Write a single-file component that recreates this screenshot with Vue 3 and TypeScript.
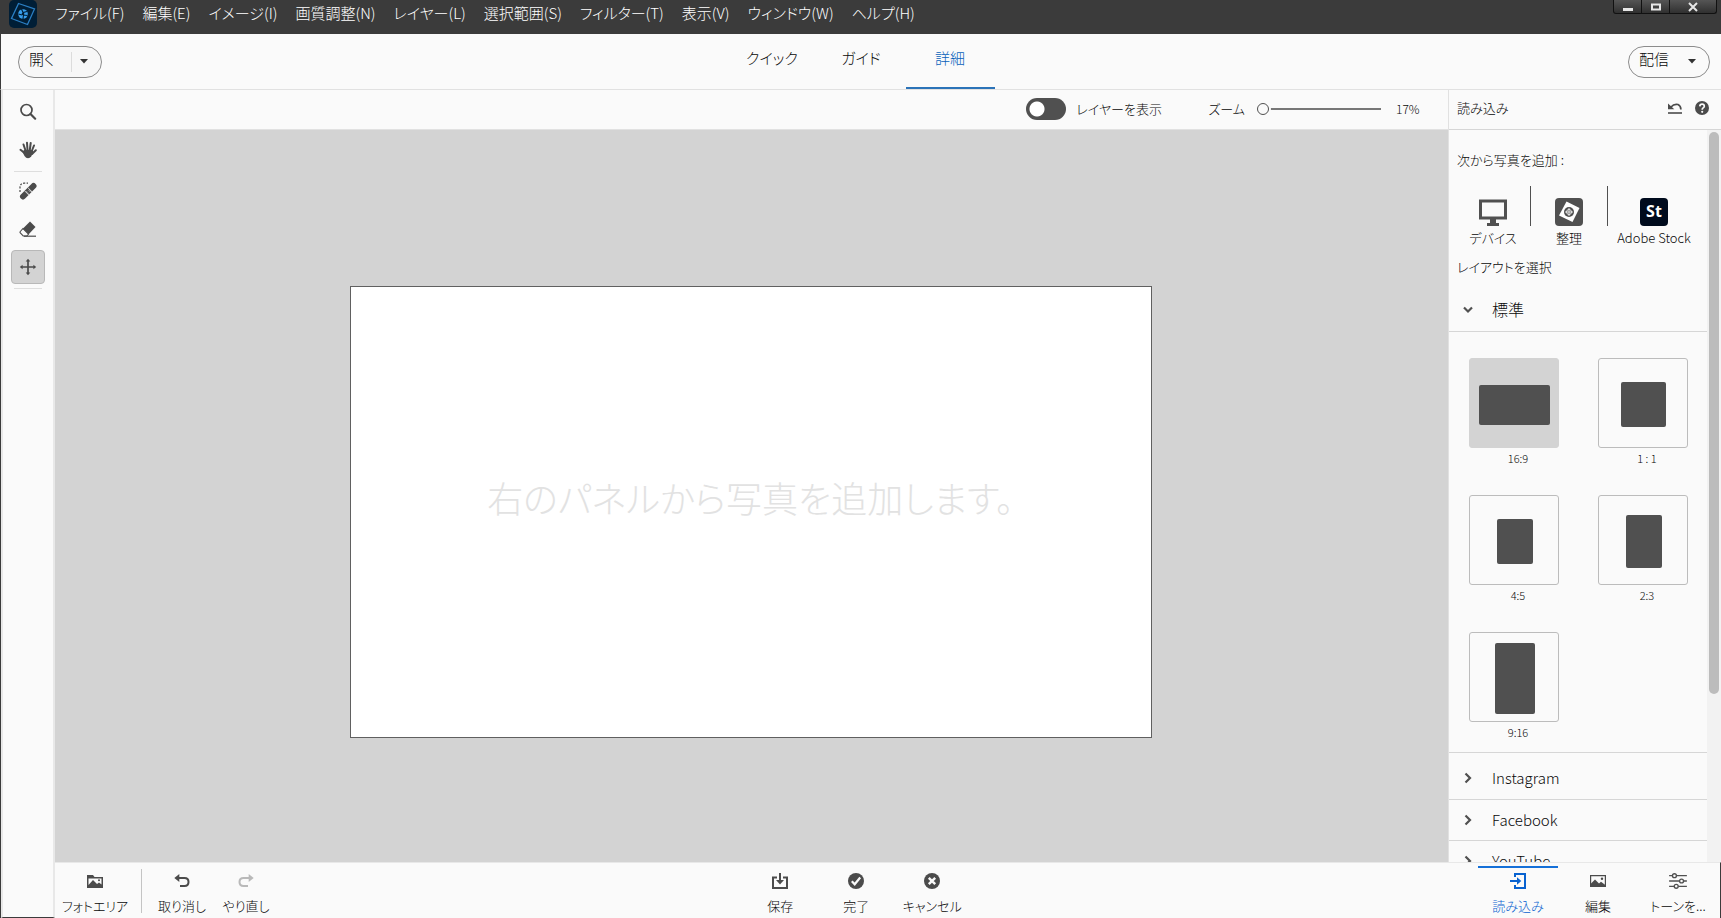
<script setup lang="ts">
import { ref } from 'vue'

const menus = [
  'ファイル(F)', '編集(E)', 'イメージ(I)', '画質調整(N)', 'レイヤー(L)',
  '選択範囲(S)', 'フィルター(T)', '表示(V)', 'ウィンドウ(W)', 'ヘルプ(H)',
]
const modes = ['クイック', 'ガイド', '詳細']
const activeMode = ref('詳細')

const tool = ref('move')
const showLayers = ref(false)
const zoom = ref(17)

interface Layout { label: string; w: number; h: number }
const layouts: Layout[] = [
  { label: '16:9', w: 71, h: 40 },
  { label: '1 : 1', w: 45, h: 45 },
  { label: '4:5', w: 36, h: 45 },
  { label: '2:3', w: 36, h: 53 },
  { label: '9:16', w: 40, h: 71 },
]
const layout = ref('16:9')
const groups = ['Instagram', 'Facebook', 'YouTube']
const task = ref('import')
</script>

<template>
  <div class="app">
    <header class="menubar">
      <svg class="logo" viewBox="0 0 28 28" aria-hidden="true">
        <rect width="28" height="28" rx="5" fill="#001e36" />
        <path d="M9.500 3.500 25.500 9 18.500 24.500 2.500 18.500Z" fill="none" stroke="#2a7fc4" stroke-width="1.300" />
        <circle cx="14" cy="14" r="4.800" fill="#38a0ee" />
        <path d="m12.500 9 1.500 3.500 4-1M18.500 15.500l-4-.5-.5 4M9.500 14l3.500 1" fill="none" stroke="#001e36" stroke-width="1.100" />
        <circle cx="14" cy="14" r="1.300" fill="#001e36" />
      </svg>
      <nav class="menus">
        <button v-for="m in menus" :key="m" type="button">{{ m }}</button>
      </nav>
      <div class="window-buttons">
        <button type="button" aria-label="最小化">
          <svg width="12" height="10" viewBox="0 0 12 10"><path d="M1 7.500h10" stroke="#e6e6e6" stroke-width="3" /></svg>
        </button>
        <button type="button" aria-label="最大化">
          <svg width="12" height="10" viewBox="0 0 12 10"><path d="M2 2.500h8v5H2z" fill="none" stroke="#e6e6e6" stroke-width="2" /></svg>
        </button>
        <button type="button" class="close" aria-label="閉じる">
          <svg width="12" height="10" viewBox="0 0 12 10"><path d="m2 1 8 8M10 1 2 9" stroke="#e6e6e6" stroke-width="2" /></svg>
        </button>
      </div>
    </header>

    <div class="modebar">
      <button type="button" class="pill open">
        <span>開く</span>
        <i class="rule"></i>
        <svg width="8" height="5" viewBox="0 0 8 5"><path d="M0 0h8L4 4.500z" fill="#333" /></svg>
      </button>
      <nav class="modes">
        <button
          v-for="m in modes" :key="m" type="button"
          :class="{ active: m === activeMode }" @click="activeMode = m"
        >{{ m }}</button>
      </nav>
      <button type="button" class="pill share">
        <span>配信</span>
        <svg width="8" height="5" viewBox="0 0 8 5"><path d="M0 0h8L4 4.500z" fill="#333" /></svg>
      </button>
    </div>

    <div class="workspace">
      <aside class="rail">
        <button type="button" aria-label="ズーム" :class="{ on: tool === 'zoom' }" @click="tool = 'zoom'">
          <svg viewBox="0 0 18 18"><circle cx="7.500" cy="7" r="5.500" fill="none" stroke="#4b4b4b" stroke-width="1.700" /><path d="m11.500 11 4.700 4.700" stroke="#4b4b4b" stroke-width="2.200" stroke-linecap="round" /></svg>
        </button>
        <button type="button" aria-label="手のひら" :class="{ on: tool === 'hand' }" @click="tool = 'hand'">
          <svg viewBox="0 0 18 18"><g stroke="#4b4b4b" stroke-width="2" stroke-linecap="round" fill="none"><path d="M6.500 9.500 4.500 3.500M8.500 9 8 1.800M10.800 9l.9-7M12.800 10l2.200-5.500M13 13l3.800-3.800M5.500 12 1.500 8.800" /></g><path d="M5 9h8.500l1 2-2.200 4.300Q11 17.300 9 17.300T5.500 15L3.500 11z" fill="#4b4b4b" /></svg>
        </button>
        <hr class="first">
        <button type="button" aria-label="スポット修復ブラシ" :class="{ on: tool === 'heal' }" @click="tool = 'heal'">
          <svg viewBox="0 0 18 18"><path d="M1 10V5.500Q1 1.500 5 1.200h4" fill="none" stroke="#4b4b4b" stroke-width="1.200" stroke-dasharray="2 1.400" /><path d="M4 14.500 14.500 4" stroke="#4b4b4b" stroke-width="6" stroke-linecap="round" /><path d="m6 9.200 3.800 3.800M9.200 6l3.800 3.800" stroke="#fafafa" stroke-width=".9" /><path d="M8 9.800l.1.100M9.700 8.200l.1.100M9.200 11l.1.100M10.900 9.400l.1.100" stroke="#fafafa" stroke-width="1" stroke-linecap="round" /></svg>
        </button>
        <button type="button" aria-label="消しゴム" :class="{ on: tool === 'erase' }" @click="tool = 'erase'">
          <svg viewBox="0 0 18 18"><path d="M11 1.500 16.500 7l-7 7.500-6-5.500z" fill="#4b4b4b" /><path d="m4 8.500 5.500 5.500-1.700 2H4.200L1.300 13q-.6-.8 0-1.500z" fill="#fafafa" stroke="#4b4b4b" stroke-width="1.100" /><path d="M5 16.200h12" stroke="#4b4b4b" stroke-width="1.200" /></svg>
        </button>
        <button type="button" aria-label="移動" :class="{ on: tool === 'move' }" @click="tool = 'move'">
          <svg viewBox="0 0 18 18"><path d="M9 2v14M2 9h14" stroke="#4b4b4b" stroke-width="1.700" /><path d="m9 .8 2.300 2.800H6.700zM9 17.200l2.300-2.800H6.700zM.8 9l2.800-2.300v4.600zM17.200 9l-2.800-2.300v4.600z" fill="#4b4b4b" /></svg>
        </button>
        <hr>
      </aside>

      <section class="stage">
        <div class="options">
          <label class="layers"><input v-model="showLayers" type="checkbox" class="switch"><span>レイヤーを表示</span></label>
          <label class="zoom"><span>ズーム</span><input v-model.number="zoom" type="range" min="17" max="3200"></label>
          <output>{{ zoom }}%</output>
        </div>
        <div class="canvas">
          <div class="artboard"><p>右のパネルから写真を追加します。</p></div>
        </div>
      </section>

      <aside class="panel">
        <div class="panel-head">
          <h2>読み込み</h2>
          <button type="button" aria-label="リセット">
            <svg width="16" height="14" viewBox="0 0 16 14"><path d="M4 6Q7 2.500 11 3.500 13.800 4.800 13.900 8.500" fill="none" stroke="#4b4b4b" stroke-width="1.700" /><path d="M1 2.500V8.200h6.300z" fill="#4b4b4b" /><path d="M1 12h14" stroke="#4b4b4b" stroke-width="1.600" /></svg>
          </button>
          <button type="button" aria-label="ヘルプ">
            <svg width="14" height="14" viewBox="0 0 14 14"><circle cx="7" cy="7" r="7" fill="#4b4b4b" /><path d="M4.800 5.300Q5 3.200 7.100 3.200T9.300 5.200Q9.300 6.200 8.200 6.900 7.200 7.600 7.200 8.700" fill="none" stroke="#fafafa" stroke-width="1.700" /><circle cx="7.200" cy="10.800" r="1.100" fill="#fafafa" /></svg>
          </button>
        </div>
        <div class="panel-body">
          <div class="panel-content">
            <p class="caption">次から写真を追加 :</p>
            <div class="sources">
              <button type="button">
                <svg width="28" height="28" viewBox="0 0 28 28"><path d="M1.500 3h25v17h-25z" fill="none" stroke="#505050" stroke-width="3" /><path d="M11 21h6v4h3v3H8v-3h3z" fill="#505050" /></svg>
                <span>デバイス</span>
              </button>
              <i></i>
              <button type="button" class="organizer">
                <svg width="28" height="28" viewBox="0 0 28 28"><rect width="28" height="28" rx="4" fill="#505050" /><path d="m11.500 3.500 13 6.500-7 14L4 17.500z" fill="#fff" /><circle cx="14" cy="14" r="5" fill="#505050" /><path d="M14 10v8M10 14h8" stroke="#fff" stroke-width=".8" /><circle cx="14" cy="14" r="2.500" fill="none" stroke="#fff" stroke-width=".8" /></svg>
                <span>整理</span>
              </button>
              <i></i>
              <button type="button" class="adobe">
                <span class="stock">St</span>
                <span>Adobe Stock</span>
              </button>
            </div>
            <p class="caption pick">レイアウトを選択</p>
            <button type="button" class="group expanded">
              <svg width="10" height="8" viewBox="0 0 10 8"><path d="m1 1.500 4 4 4-4" fill="none" stroke="#505050" stroke-width="2.200" /></svg>
              <span>標準</span>
            </button>
            <div class="layouts">
              <button v-for="l in layouts" :key="l.label" type="button" :class="{ on: l.label === layout }" @click="layout = l.label">
                <span class="tile"><i :style="{ width: l.w + 'px', height: l.h + 'px' }"></i></span>
                <span class="ratio">{{ l.label }}</span>
              </button>
            </div>
            <button v-for="g in groups" :key="g" type="button" class="group">
              <svg width="8" height="12" viewBox="0 0 8 12"><path d="m1.500 1.500 4.500 4.500-4.500 4.500" fill="none" stroke="#505050" stroke-width="2.200" /></svg>
              <span>{{ g }}</span>
            </button>
          </div>
          <div class="scroll"><i></i></div>
        </div>
      </aside>

      <footer class="taskbar">
        <div class="left">
          <button type="button" class="bin">
            <svg width="16" height="14" viewBox="0 0 16 14"><path d="M0 1h6l1.500 2H16v11H0z" fill="#4b4b4b" /><path d="M1.500 4.500h13v6L12 8.500l-2 1.500-4-4-4.500 5z" fill="#fafafa" /><circle cx="12" cy="6.300" r="1" fill="#4b4b4b" /></svg>
            <span>フォトエリア</span>
          </button>
          <i></i>
          <button type="button">
            <svg width="16" height="14" viewBox="0 0 16 14"><path d="M4 4h6.500q4 0 4 4t-4 4H6" fill="none" stroke="#4b4b4b" stroke-width="2" /><path d="M.3 4 5.300 0v8z" fill="#4b4b4b" /></svg>
            <span>取り消し</span>
          </button>
          <button type="button" class="redo">
            <svg width="16" height="14" viewBox="0 0 16 14"><path d="M12 4H5.500q-4 0-4 4t4 4H10" fill="none" stroke="#b9b9b9" stroke-width="2" /><path d="M15.700 4l-5-4v8z" fill="#b9b9b9" /></svg>
            <span>やり直し</span>
          </button>
        </div>
        <div class="center">
          <button type="button">
            <svg width="16" height="16" viewBox="0 0 16 16"><path d="M5 4.500H1V15h14V4.500h-4" fill="none" stroke="#4b4b4b" stroke-width="2" /><path d="M8 0v8" stroke="#4b4b4b" stroke-width="2" /><path d="M4 7h8l-4 4.500z" fill="#4b4b4b" /></svg>
            <span>保存</span>
          </button>
          <button type="button">
            <svg width="16" height="16" viewBox="0 0 16 16"><circle cx="8" cy="8" r="8" fill="#4b4b4b" /><path d="m3.800 8.300 2.900 3 5.500-6.800" fill="none" stroke="#fafafa" stroke-width="2.200" /></svg>
            <span>完了</span>
          </button>
          <button type="button">
            <svg width="16" height="16" viewBox="0 0 16 16"><circle cx="8" cy="8" r="8" fill="#4b4b4b" /><path d="m4.800 4.800 6.400 6.400M11.200 4.800l-6.400 6.400" stroke="#fafafa" stroke-width="2.400" /></svg>
            <span>キャンセル</span>
          </button>
        </div>
        <nav class="right">
          <button type="button" :class="{ active: task === 'import' }" @click="task = 'import'">
            <svg width="16" height="16" viewBox="0 0 16 16"><path d="M5 4V1h10v14H5v-3" fill="none" stroke="currentColor" stroke-width="2" /><path d="M0 8h8" stroke="currentColor" stroke-width="2" /><path d="M7 4.300 11.300 8 7 11.700z" fill="currentColor" /></svg>
            <span>読み込み</span>
          </button>
          <button type="button" :class="{ active: task === 'edit' }" @click="task = 'edit'">
            <svg width="16" height="16" viewBox="0 0 16 16"><path d="M.6 2.600h14.800v10.800H.6z" fill="none" stroke="#4b4b4b" stroke-width="1.200" /><path d="M1 13v-2.500l4-4 4 4 2-1.700 4 3V13z" fill="#4b4b4b" /><circle cx="12" cy="5.800" r="1.200" fill="#4b4b4b" /></svg>
            <span>編集</span>
          </button>
          <button type="button" :class="{ active: task === 'tone' }" @click="task = 'tone'">
            <svg width="20" height="18" viewBox="0 0 20 18"><g fill="#fafafa" stroke="#505050" stroke-width="1.500"><path d="M0 3h20M0 9h20M0 15h20" /><circle cx="6" cy="3" r="2.200" /><circle cx="14" cy="9" r="2.200" /><circle cx="8" cy="15" r="2.200" /></g></svg>
            <span>トーンを...</span>
          </button>
        </nav>
      </footer>
    </div>
  </div>
</template>

<style>
html, body { margin: 0; overflow: hidden; }
</style>

<style scoped>
.app {
  display: flex;
  flex-direction: column;
  height: 100vh;
  background: #fafafa;
  color: #080808;
  font: 300 13px/20px "Noto Sans CJK JP", "Liberation Sans", sans-serif;
  font-feature-settings: "palt";
}
* { box-sizing: border-box; }
button {
  padding: 0;
  border: 0;
  background: none;
  color: inherit;
  font: inherit;
  font-feature-settings: inherit;
  white-space: nowrap;
}
svg { display: block; flex: none; }
p, h2 { margin: 0; font: inherit; }

.menubar {
  display: flex;
  flex: none;
  height: 34px;
  padding: 0 4px 0 9px;
  background: #3b3b3b;
  color: #fff;
}
.logo { width: 28px; height: 28px; }
.menus { display: flex; flex: 1; gap: 18px; height: 26px; padding-left: 18px; font-size: 15px; }
.window-buttons {
  display: flex;
  height: 14px;
  border: solid #111;
  border-width: 0 1px 1px;
  border-radius: 0 0 3px 3px;
  background: linear-gradient(#555, #303030);
}
.window-buttons button { display: grid; place-items: center; width: 28px; border-right: 1px solid #111; }
.window-buttons .close { width: 46px; border: 0; }

.modebar {
  display: grid;
  grid-template-columns: 1fr auto 1fr;
  flex: none;
  align-items: center;
  height: 56px;
  border-left: 1px solid #3b3b3b;
  border-bottom: 1px solid #e1e1e1;
}
.pill {
  display: flex;
  align-items: center;
  height: 32px;
  border: 1px solid #8c8c8c;
  border-radius: 16px;
  background: #f7f7f7;
  font-size: 15px;
}
.pill span { padding-bottom: 6px; }
.open { width: 84px; margin-left: 17px; padding: 0 13px 0 10px; justify-content: space-between; }
.rule { width: 1px; height: 20px; margin-left: 8px; background: #dcdcdc; }
.share { justify-self: end; justify-content: space-between; width: 82px; margin-right: 11px; padding: 0 13px 0 10px; background: #fafafa; }
.modes { display: flex; align-self: stretch; }
.modes button { width: 89px; height: 55px; padding-bottom: 6px; border-bottom: 2px solid transparent; font-size: 15px; }
.modes .active { border-color: #2b73b8; color: #0862ba; }

.workspace {
  display: grid;
  grid-template-columns: 54px minmax(0, 1fr) 273px;
  grid-template-rows: minmax(0, 1fr) 56px;
  flex: 1;
  min-height: 0;
  border-left: 1px solid #3b3b3b;
}
.rail {
  grid-row: 1 / 3;
  display: flex;
  flex-direction: column;
  align-items: center;
  gap: 4px;
  padding-top: 5px;
  border: solid #e8e8e8;
  border-width: 0 2px;
  border-bottom: 1px solid #3b3b3b;
}
.rail button { display: grid; place-items: center; width: 34px; height: 34px; border-radius: 4px; }
.rail svg { width: 18px; height: 18px; }
.rail .on { border: 1px solid #b8b8b8; background: #d3d3d3; }
.rail hr { width: 28px; height: 1px; margin: 0; border: 0; background: #dedede; }
.rail .first { margin-bottom: -2px; }

.stage { display: flex; flex-direction: column; min-width: 0; }
.options {
  display: flex;
  flex: none;
  align-items: center;
  justify-content: flex-end;
  height: 40px;
  padding: 0 28px 2px 0;
  border-bottom: 1px solid #e1e1e1;
}
.layers, .zoom { display: flex; align-items: center; }
.layers { gap: 10px; width: 182px; white-space: nowrap; }
.zoom { gap: 12px; }
.options output { width: 24px; margin-left: 15px; font-size: 12px; }
.switch {
  appearance: none;
  flex: none;
  width: 40px;
  height: 22px;
  margin: 0;
  border-radius: 11px;
  background: radial-gradient(circle at 11px 11px, #fff 7px, #505050 8px);
}
.switch:checked { background: radial-gradient(circle at 29px 11px, #fff 7px, #1570c8 8px); }
.zoom input { appearance: none; width: 124px; height: 16px; margin: 0; background: linear-gradient(#777, #777) center / 100% 2px no-repeat; }
.zoom input::-webkit-slider-thumb {
  appearance: none;
  width: 12px;
  height: 12px;
  border: 1px solid #505050;
  border-radius: 50%;
  background: #fafafa;
  box-shadow: 0 0 0 2px #fafafa;
}
.canvas {
  display: grid;
  place-items: center;
  flex: 1;
  padding: 32px 2px 0 0;
  background: #d3d3d3;
}
.artboard {
  display: grid;
  place-items: center;
  width: 58%;
  max-width: 802px;
  min-width: 600px;
  aspect-ratio: 16 / 9;
  padding-bottom: 30px;
  border: 1px solid #606060;
  background: #fff;
  color: #e2e2e2;
  font-size: 36px;
  line-height: 40px;
  white-space: nowrap;
}

.panel { display: flex; flex-direction: column; min-height: 0; border-left: 1px solid #e1e1e1; }
.panel-head {
  display: flex;
  flex: none;
  align-items: center;
  gap: 12px;
  height: 40px;
  padding: 0 12px 4px 8px;
  border-bottom: 1px solid #d6d6d6;
}
.panel-head h2 { flex: 1; }
.panel-body { display: flex; flex: 1; min-height: 0; overflow: hidden; }
.panel-content { flex: 1; min-width: 0; overflow: hidden; padding-top: 20px; }
.caption { padding-left: 8px; }
.pick { padding-top: 8px; }
.sources { display: flex; padding: 16px 7px 0; }
.sources button { display: flex; flex: none; flex-direction: column; align-items: center; width: 74px; padding-top: 12px; }
.sources .organizer { width: 76px; }
.sources .adobe { width: 92px; }
.sources button span:last-child { line-height: 23px; }
.sources > i { flex: none; width: 1px; height: 40px; background: #505050; }
.stock {
  width: 28px;
  height: 28px;
  border-radius: 4px;
  background: #000b1d;
  color: #fff;
  font: 700 16px/26px "Open Sans", sans-serif;
  text-align: center;
}
.group { display: flex; align-items: center; width: 100%; height: 41px; padding-left: 14px; border-bottom: 1px solid #d6d6d6; font-size: 15px; }
.group svg { width: 10px; margin-right: 19px; }
.group.expanded { height: 55px; padding-top: 12px; font-size: 16px; }
.group.expanded span { padding-bottom: 2px; }
.layouts {
  display: grid;
  grid-template-columns: 90px 90px;
  gap: 26px 39px;
  padding: 26px 20px 9px;
  border-bottom: 1px solid #d6d6d6;
}
.layouts + .group { height: 47px; padding-top: 3px; }
.layouts button { display: block; }
.tile { display: grid; place-items: center; height: 90px; padding: 3px 0 0 1px; border: 1px solid #bcbcbc; border-radius: 3px; }
.tile i { border-radius: 2px; background: #505050; }
.on .tile { border-color: #d3d3d3; background: #d3d3d3; }
.ratio { display: block; padding: 0 0 1px 8px; font-size: 11px; }
.scroll { width: 14px; padding: 2px 2px 0; background: #f2f2f2; }
.scroll i { display: block; width: 10px; height: 77%; border-radius: 5px; background: #bcbcbc; }

.taskbar {
  grid-column: 2 / 4;
  display: grid;
  grid-template-columns: minmax(0, 11fr) auto minmax(0, 12fr);
  border-top: 1px solid #e8e8e8;
  border-right: 1px solid #3b3b3b;
  background: #fafafa;
}
.taskbar div, .taskbar nav { display: flex; }
.taskbar button { display: flex; flex-direction: column; align-items: center; padding-top: 10px; }
.taskbar svg { height: 16px; }
.taskbar button span { margin-top: 7px; }
.left > i { width: 1px; height: 44px; margin: 6px 8px 0 6px; background: #c4c4c4; }
.left button { width: 64px; }
.left .bin { width: 80px; }
.center button { width: 76px; }
.right { justify-content: flex-end; padding-right: 2px; }
.right button { width: 80px; margin-top: 3px; padding-top: 5px; border-top: 2px solid transparent; }
.right .active { border-color: #1570d8; color: #0862d0; }
</style>
